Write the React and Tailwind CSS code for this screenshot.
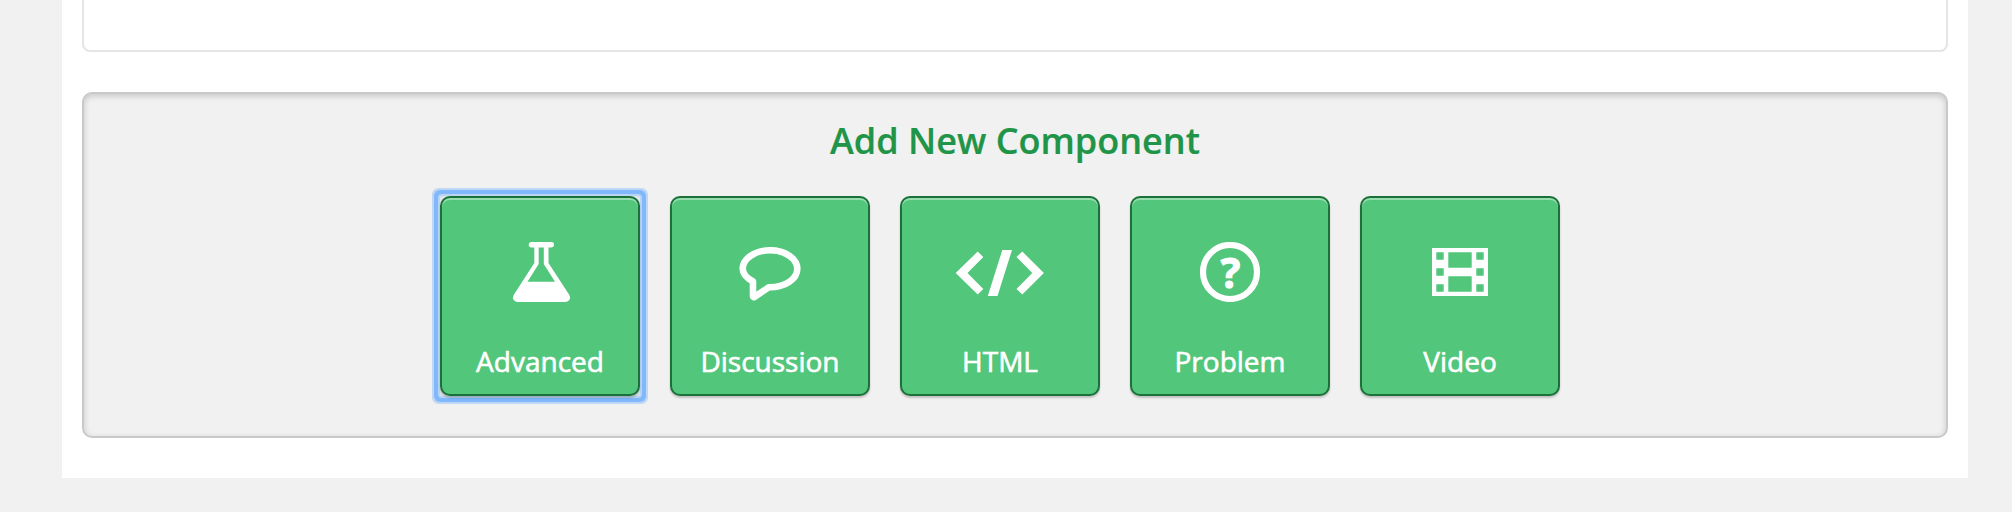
const icons = {
  Advanced: (
    <path
      fillRule="evenodd"
      d="M91 46H112Q114 46 114 48.500Q114 51.500 111 51.500H108.500V67L129 98.500Q131 102 129.300 104Q128 106 125 106H78Q75 106 73.700 104Q72 102 74 98.500L94.300 67V51.500H91.500Q88.700 51.500 88.700 48.500Q88.700 46 91 46ZM98.700 51.500V68L87.500 85.700H115L103.800 68V51.500Z"
    />
  ),
  Discussion: (
    <path
      fill="none"
      stroke="currentColor"
      strokeWidth="6.6"
      strokeLinejoin="round"
      d="M83 85.500C76.500 82 72.700 78 72.700 72.800C72.700 62.500 85 54.300 100 54.300S127.300 62.500 127.300 72.800S115 91.600 98.800 91.300L84 101.200L83 100.500Z"
    />
  ),
  HTML: (
    <path d="M55.700 77L77.700 55.500L83.300 61L67.500 77L83.300 93L77.700 98.500ZM143.900 77L122.300 55.500L116.500 61L132.300 77L116.500 93L122.300 98.500ZM102.300 54H112L97.500 100H87.800Z" />
  ),
  Problem: (
    <>
      <circle cx="100" cy="76" r="27" fill="none" stroke="currentColor" strokeWidth="6.2" />
      <text x="100.500" y="91.500" textAnchor="middle" stroke="currentColor" strokeWidth="1.2" className="text-[41px] font-bold">?</text>
    </>
  ),
  Video: (
    <path
      fillRule="evenodd"
      d="M72 52H128V100H72ZM76.300 56.300V63.700H83.700V56.300ZM76.300 72.300V79.700H83.700V72.300ZM76.300 88.300V95.700H83.700V88.300ZM116.300 56.300V63.700H123.700V56.300ZM116.300 72.300V79.700H123.700V72.300ZM116.300 88.300V95.700H123.700V88.300ZM88.300 56.300V71.700H111.700V56.300ZM88.300 80.300V95.700H111.700V80.300Z"
    />
  ),
};

function ComponentButton({ label, focused }) {
  return (
    <div className={focused ? "rounded-[2px] bg-[#dfe6f0] shadow-[0_0_0_2px_#b9d5f3,0_0_0_6px_#80b8fb,0_0_0_8px_#bdd7f4]" : ""}>
      <button className="flex size-[200px] flex-col items-center rounded-[10px] border-2 border-[#1b7139] bg-[#52c67b] pt-11 text-white shadow-[inset_0_2px_0_#97ddb0,0_2px_2px_rgba(0,0,0,0.2)]">
        <svg viewBox="50 46 100 60" className="h-[60px] w-[100px] shrink-0" fill="currentColor">
          {icons[label]}
        </svg>
        <span className="mt-10 text-[28px] leading-[39px] [-webkit-text-stroke:0.6px_currentColor]">{label}</span>
      </button>
    </div>
  );
}

export default function App() {
  return (
    <div className="h-[512px] w-[2012px] overflow-hidden bg-[#f1f1f1] pl-[62px] font-['Open_Sans',sans-serif]">
      <main className="h-[478px] w-[1906px] bg-white px-5">
        <div className="h-[52px] rounded-b-lg border-2 border-t-0 border-[#e5e5e5]" />
        <section className="mt-10 h-[346px] rounded-[10px] border-2 border-[#c9c9c9] bg-[#f1f1f1] pt-[22px] shadow-[inset_0_2px_6px_rgba(0,0,0,0.18)]">
          <h2 className="text-center text-4xl leading-[50px] font-semibold text-[#209447] [-webkit-text-stroke:0.2px_currentColor]">Add New Component</h2>
          <div className="mt-[30px] flex gap-[30px] pl-[356px]">
            <ComponentButton label="Advanced" focused />
            <ComponentButton label="Discussion" />
            <ComponentButton label="HTML" />
            <ComponentButton label="Problem" />
            <ComponentButton label="Video" />
          </div>
        </section>
      </main>
    </div>
  );
}
